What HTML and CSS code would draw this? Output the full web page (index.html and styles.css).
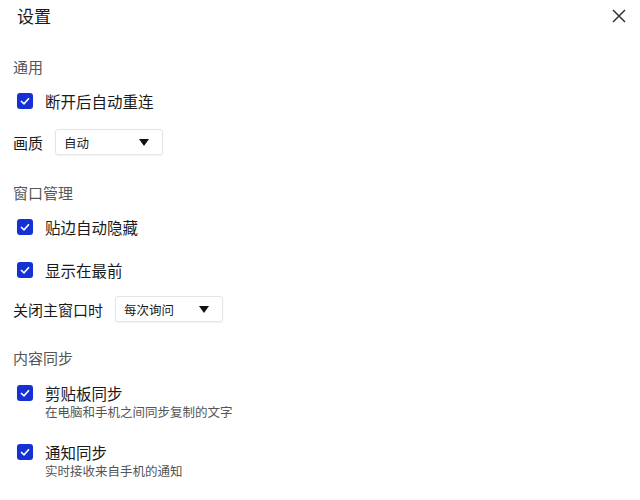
FILE: index.html
```
<!DOCTYPE html>
<html lang="zh-CN">
<head>
    <meta charset="UTF-8">
    <meta name="viewport" content="width=device-width, initial-scale=1.0">
    <title>设置</title>
    <link rel="stylesheet" href="styles.css">
</head>
<body>
    <div class="settings">
        <div class="header">
            <div class="title">设置</div>
            <button class="close" aria-label="关闭">
                <svg width="14" height="14" viewBox="0 0 14 14">
                    <path d="M1 1L13 13M13 1L1 13" stroke="#333" stroke-width="1.5" fill="none"/>
                </svg>
            </button>
        </div>

        <div class="section first">
            <div class="section-title">通用</div>
            <label class="option">
                <span class="checkbox"><svg width="10" height="8" viewBox="0 0 10 8"><path d="M1 4L4 6.8L9 1.2" stroke="#fff" stroke-width="1.6" fill="none"/></svg></span>
                <span class="option-text">断开后自动重连</span>
            </label>
            <div class="select-row">
                <span class="select-label">画质</span>
                <div class="select">
                    <span>自动</span>
                    <svg width="10" height="7" viewBox="0 0 10 7"><polygon points="0,0 10,0 5,7" fill="#111"/></svg>
                </div>
            </div>
        </div>

        <div class="section">
            <div class="section-title">窗口管理</div>
            <label class="option">
                <span class="checkbox"><svg width="10" height="8" viewBox="0 0 10 8"><path d="M1 4L4 6.8L9 1.2" stroke="#fff" stroke-width="1.6" fill="none"/></svg></span>
                <span class="option-text">贴边自动隐藏</span>
            </label>
            <label class="option lower">
                <span class="checkbox"><svg width="10" height="8" viewBox="0 0 10 8"><path d="M1 4L4 6.8L9 1.2" stroke="#fff" stroke-width="1.6" fill="none"/></svg></span>
                <span class="option-text">显示在最前</span>
            </label>
            <div class="select-row">
                <span class="select-label">关闭主窗口时</span>
                <div class="select">
                    <span>每次询问</span>
                    <svg width="10" height="7" viewBox="0 0 10 7"><polygon points="0,0 10,0 5,7" fill="#111"/></svg>
                </div>
            </div>
        </div>

        <div class="section last">
            <div class="section-title">内容同步</div>
            <label class="option has-desc">
                <span class="checkbox"><svg width="10" height="8" viewBox="0 0 10 8"><path d="M1 4L4 6.8L9 1.2" stroke="#fff" stroke-width="1.6" fill="none"/></svg></span>
                <span class="option-body">
                    <span class="option-text">剪贴板同步</span>
                    <span class="option-desc">在电脑和手机之间同步复制的文字</span>
                </span>
            </label>
            <label class="option has-desc">
                <span class="checkbox"><svg width="10" height="8" viewBox="0 0 10 8"><path d="M1 4L4 6.8L9 1.2" stroke="#fff" stroke-width="1.6" fill="none"/></svg></span>
                <span class="option-body">
                    <span class="option-text">通知同步</span>
                    <span class="option-desc">实时接收来自手机的通知</span>
                </span>
            </label>
        </div>
    </div>
</body>
</html>
```
FILE: styles.css
```
body {
    margin: 0;
    background-color: #fff;
    font-family: "Noto Sans CJK SC", "Noto Sans", sans-serif;
    color: #1a1a1a;
}

.settings {
    width: 640px;
    height: 500px;
    padding-left: 13px;
    box-sizing: border-box;
}

.header {
    height: 32px;
    display: flex;
    align-items: center;
    justify-content: space-between;
    padding-left: 4px;
    padding-right: 12px;
}

.title {
    font-size: 17px;
    line-height: 20px;
    color: #1a1a1a;
}

.close {
    width: 18px;
    height: 18px;
    padding: 0;
    border: none;
    background: none;
    display: flex;
    align-items: center;
    justify-content: center;
    cursor: pointer;
}

.section {
    display: flex;
    flex-direction: column;
    gap: 7px;
    margin-top: 24px;
}

.section.first {
    margin-top: 25px;
}

.section.last {
    margin-top: 22px;
}

.section-title {
    height: 20px;
    line-height: 20px;
    font-size: 15px;
    color: #555;
}

.option {
    height: 34px;
    display: flex;
    align-items: center;
    gap: 12px;
    padding-left: 4px;
    cursor: pointer;
}

.option.lower {
    margin-top: 2px;
    margin-bottom: -2px;
}

.option.has-desc {
    height: auto;
    align-items: flex-start;
    padding-top: 8px;
    padding-bottom: 6px;
}

.option.has-desc .checkbox {
    margin-top: 2px;
}

.checkbox {
    width: 16px;
    height: 16px;
    border-radius: 3px;
    background-color: #1531d6;
    display: flex;
    align-items: center;
    justify-content: center;
    flex-shrink: 0;
}

.option-text {
    font-size: 15.5px;
    line-height: 20px;
}

.option-body {
    display: flex;
    flex-direction: column;
}

.option-desc {
    font-size: 12.5px;
    line-height: 18px;
    color: #555;
}

.select-row {
    height: 34px;
    display: flex;
    align-items: center;
    gap: 12px;
}

.select-label {
    font-size: 15px;
}

.select {
    width: 108px;
    height: 26px;
    box-sizing: border-box;
    border: 1px solid #e4e4e4;
    border-radius: 3px;
    box-shadow: 0 1px 2px rgba(0, 0, 0, 0.06);
    display: flex;
    align-items: center;
    justify-content: space-between;
    padding: 0 13px 0 8px;
    font-size: 12.5px;
    color: #1a1a1a;
}
```
